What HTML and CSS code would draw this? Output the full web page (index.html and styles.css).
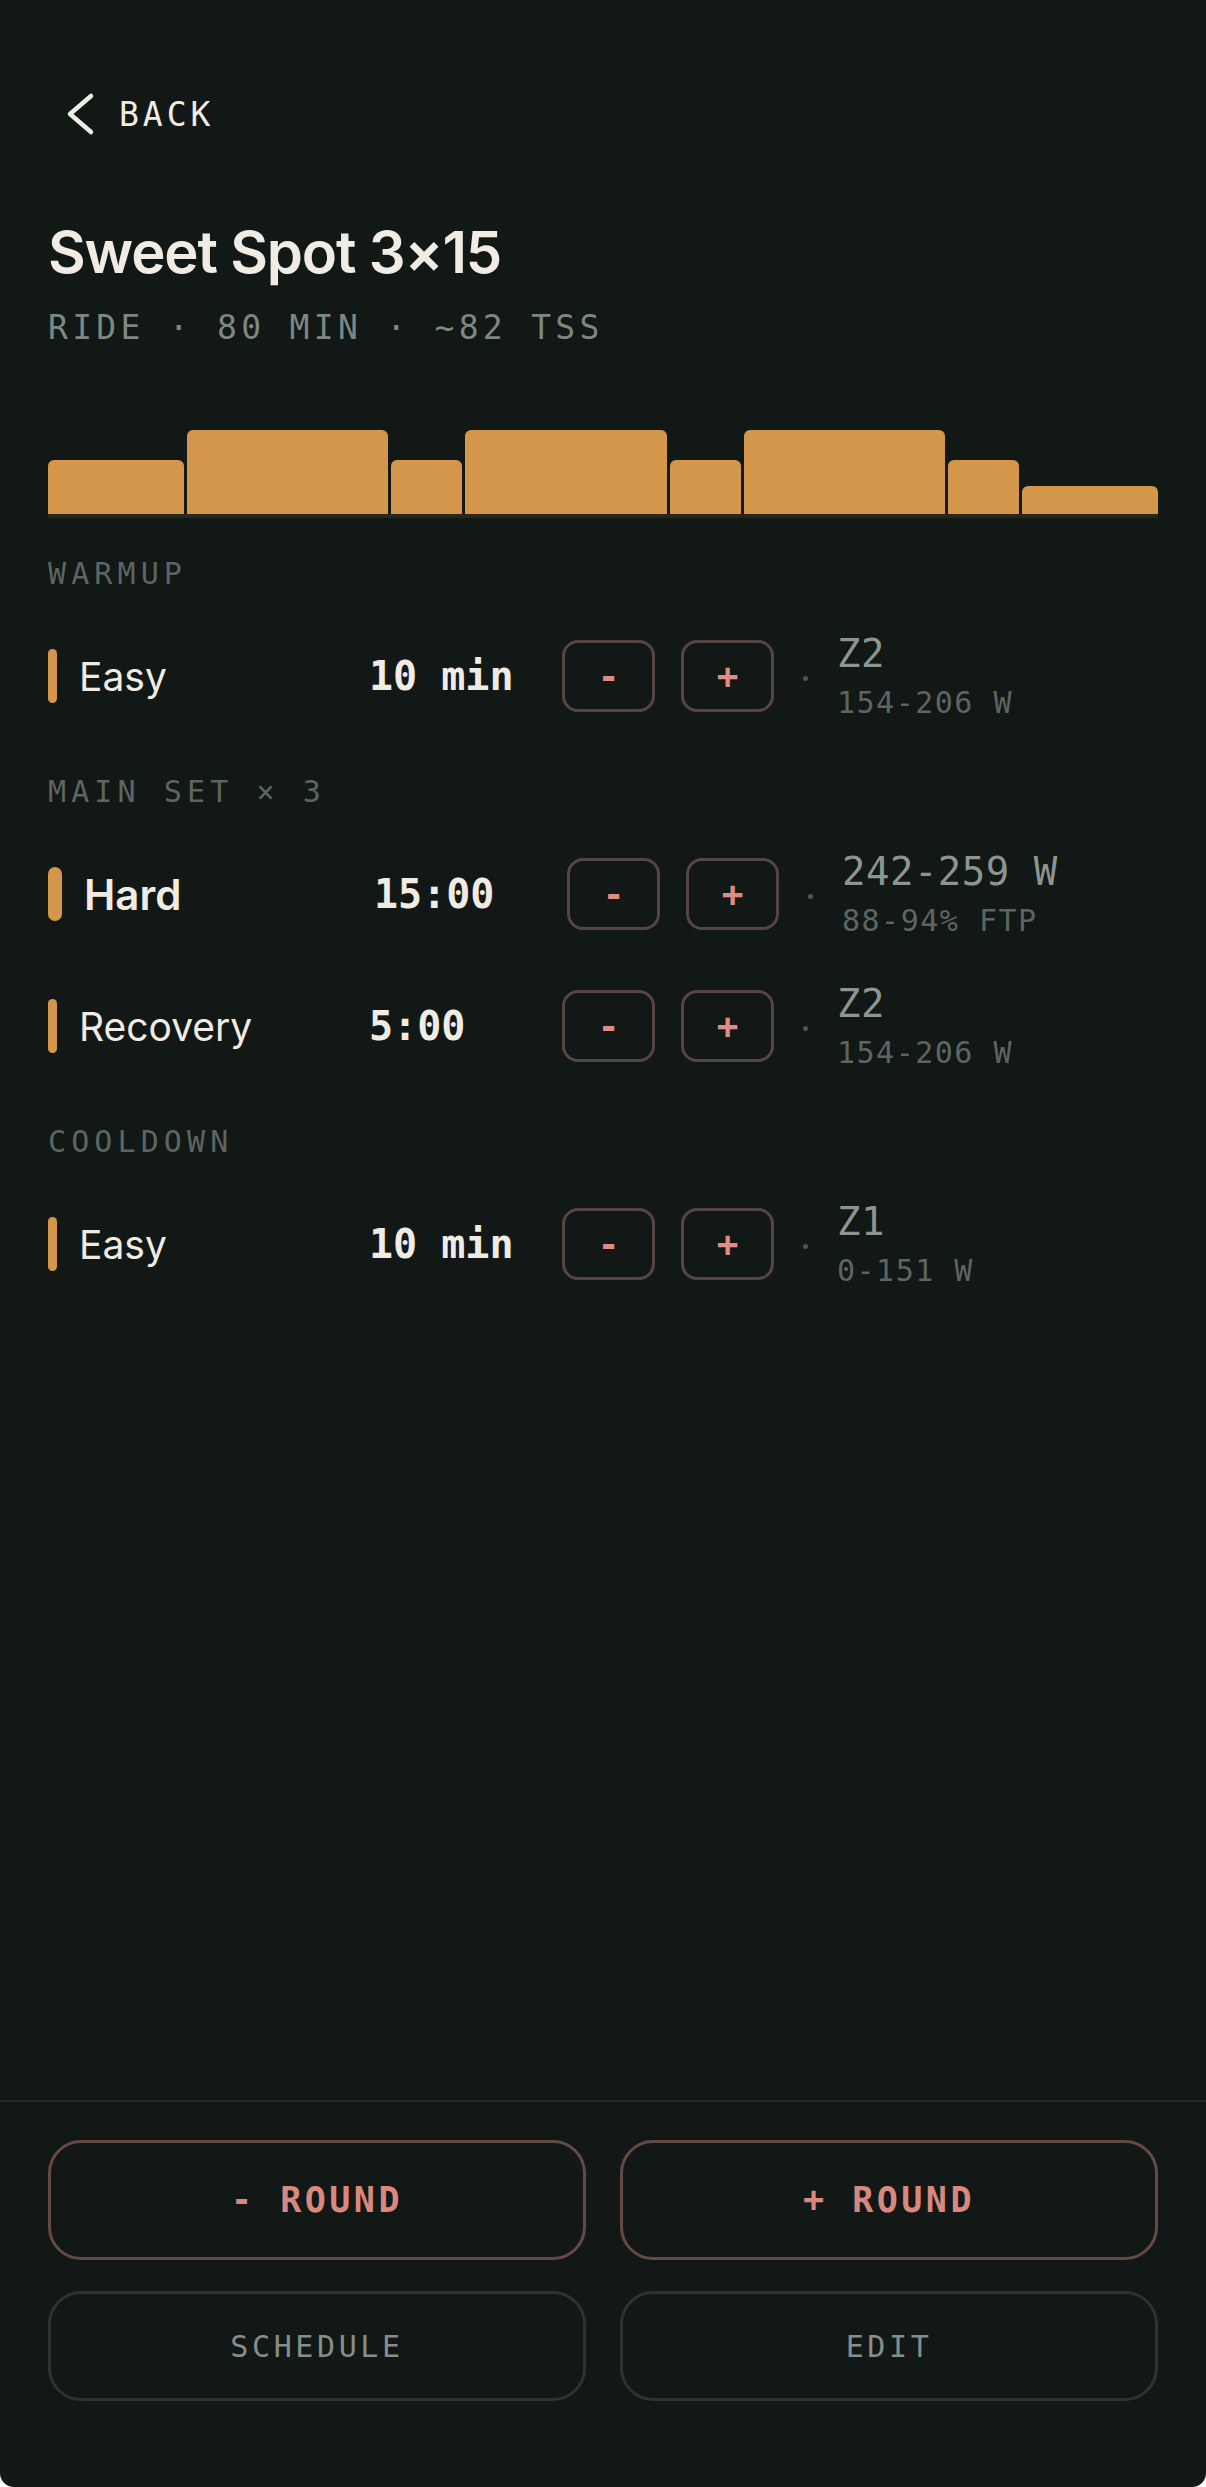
FILE: index.html
```html
<!DOCTYPE html>
<html lang="en">
<head>
    <meta charset="UTF-8">
    <meta name="viewport" content="width=device-width, initial-scale=1.0">
    <title>Sweet Spot 3×15</title>
    <link rel="stylesheet" href="styles.css">
</head>
<body>
    <div id="app">
        <div class="content">
            <a class="back" href="#">
                <svg class="back-icon" viewBox="0 0 48 44" width="48" height="44">
                    <polyline points="43,4 22,22 43,40" fill="none" stroke="#f0ebe3" stroke-width="4.5" stroke-linecap="round" stroke-linejoin="round"/>
                </svg>
                <span>BACK</span>
            </a>

            <h1 class="title">Sweet Spot 3×15</h1>
            <p class="meta">RIDE · 80 MIN · ~82 TSS</p>

            <div class="chart">
                <div class="bar" style="flex-grow: 10; height: 54px"></div>
                <div class="bar" style="flex-grow: 15; height: 84px"></div>
                <div class="bar" style="flex-grow: 5; height: 54px"></div>
                <div class="bar" style="flex-grow: 15; height: 84px"></div>
                <div class="bar" style="flex-grow: 5; height: 54px"></div>
                <div class="bar" style="flex-grow: 15; height: 84px"></div>
                <div class="bar" style="flex-grow: 5; height: 54px"></div>
                <div class="bar" style="flex-grow: 10; height: 28px"></div>
            </div>

            <div class="section-label">WARMUP</div>
            <div class="step">
                <span class="step-mark"></span>
                <span class="step-name">Easy</span>
                <span class="step-dur">10 min</span>
                <div class="step-adjust"><button>-</button><button>+</button></div>
                <span class="step-dot"></span>
                <div class="step-zone">
                    <div class="zone-main">Z2</div>
                    <div class="zone-sub">154-206 W</div>
                </div>
            </div>

            <div class="section-label">MAIN SET × 3</div>
            <div class="step step-hard">
                <span class="step-mark"></span>
                <span class="step-name">Hard</span>
                <span class="step-dur">15:00</span>
                <div class="step-adjust"><button>-</button><button>+</button></div>
                <span class="step-dot"></span>
                <div class="step-zone">
                    <div class="zone-main">242-259 W</div>
                    <div class="zone-sub">88-94% FTP</div>
                </div>
            </div>
            <div class="step">
                <span class="step-mark"></span>
                <span class="step-name">Recovery</span>
                <span class="step-dur">5:00</span>
                <div class="step-adjust"><button>-</button><button>+</button></div>
                <span class="step-dot"></span>
                <div class="step-zone">
                    <div class="zone-main">Z2</div>
                    <div class="zone-sub">154-206 W</div>
                </div>
            </div>

            <div class="section-label">COOLDOWN</div>
            <div class="step">
                <span class="step-mark"></span>
                <span class="step-name">Easy</span>
                <span class="step-dur">10 min</span>
                <div class="step-adjust"><button>-</button><button>+</button></div>
                <span class="step-dot"></span>
                <div class="step-zone">
                    <div class="zone-main">Z1</div>
                    <div class="zone-sub">0-151 W</div>
                </div>
            </div>
        </div>

        <div class="footer">
            <button class="btn btn-round">- ROUND</button>
            <button class="btn btn-round">+ ROUND</button>
            <button class="btn btn-plain">SCHEDULE</button>
            <button class="btn btn-plain">EDIT</button>
        </div>
    </div>
</body>
</html>
```

FILE: styles.css
```css
:root {
    --bg: #111816;
    --text: #f0ebe3;
    --accent: #d4964a;
    --salmon: #e08c84;
    --muted: #7f8782;
    --dim: #5d6561;
    --mono: "DejaVu Sans Mono", "Liberation Mono", monospace;
    --sans: "Inter", "Noto Sans", sans-serif;
}

body {
    margin: 0;
    background: #ffffff;
}

#app {
    height: 2487px;
    background: var(--bg);
    color: var(--text);
    display: flex;
    flex-direction: column;
    border-radius: 0 0 14px 14px;
    overflow: hidden;
}

.content {
    flex: 1;
    padding: 0 48px;
}

.back {
    display: flex;
    align-items: center;
    gap: 23px;
    height: 44px;
    margin-top: 92px;
    color: var(--text);
    text-decoration: none;
    font-family: var(--mono);
    font-size: 33px;
    letter-spacing: 0.12em;
}

.back-icon {
    display: block;
}

.title {
    margin: 80px 0 0;
    font-family: var(--sans);
    font-weight: 600;
    font-size: 58px;
    line-height: 72px;
    letter-spacing: -0.02em;
}

.meta {
    margin: 20px 0 0;
    font-family: var(--mono);
    font-size: 33px;
    line-height: 40px;
    letter-spacing: 0.13em;
    color: var(--muted);
}

.chart {
    display: flex;
    align-items: flex-end;
    gap: 3px;
    height: 96px;
    margin-top: 70px;
    border-bottom: 4px solid #2a2819;
}

.bar {
    flex-shrink: 1;
    flex-basis: 6px;
    background: var(--accent);
    border-radius: 6px 6px 0 0;
}

.section-label {
    margin: 38px 0 18px;
    font-family: var(--mono);
    font-size: 30px;
    line-height: 36px;
    letter-spacing: 0.17em;
    color: var(--dim);
}

.step + .section-label {
    margin-top: 32px;
}

.step {
    display: flex;
    align-items: center;
    height: 72px;
    padding: 30px 0;
}

.step-mark {
    width: 9px;
    height: 54px;
    border-radius: 5px;
    background: var(--accent);
    margin-right: 22px;
    flex-shrink: 0;
}

.step-name {
    width: 290px;
    font-family: var(--sans);
    font-size: 39px;
    color: var(--text);
}

.step-hard .step-mark {
    width: 14px;
    border-radius: 7px;
}

.step-hard .step-name {
    font-size: 42px;
    font-weight: 600;
}

.step-dur {
    width: 193px;
    font-family: var(--mono);
    font-weight: bold;
    font-size: 40px;
    color: var(--text);
}

.step-adjust {
    display: flex;
    gap: 26px;
}

.step-adjust button {
    width: 93px;
    height: 72px;
    background: transparent;
    border: 3px solid #574543;
    border-radius: 16px;
    color: var(--salmon);
    font-family: var(--mono);
    font-weight: bold;
    font-size: 36px;
    padding: 0;
    cursor: pointer;
}

.step-dot {
    width: 5px;
    height: 5px;
    border-radius: 50%;
    background: #4e5552;
    margin: 4px 29px 0 29px;
}

.step-zone {
    font-family: var(--mono);
    letter-spacing: 0.03em;
}

.zone-main {
    font-size: 39px;
    line-height: 44px;
    color: #8d9590;
}

.zone-sub {
    margin-top: 9px;
    font-size: 30px;
    line-height: 36px;
    letter-spacing: 0.05em;
    color: var(--dim);
}

.footer {
    border-top: 2px solid #222926;
    padding: 38px 48px 86px;
    display: grid;
    grid-template-columns: 1fr 1fr;
    grid-template-rows: 120px 110px;
    column-gap: 34px;
    row-gap: 31px;
}

.btn {
    background: transparent;
    border-radius: 33px;
    font-family: var(--mono);
    cursor: pointer;
}

.btn-round {
    border: 3px solid #664945;
    color: #d9887e;
    font-weight: bold;
    font-size: 35px;
    letter-spacing: 0.1em;
}

.btn-plain {
    border: 3px solid #2c3330;
    color: #878e8a;
    font-size: 30px;
    letter-spacing: 0.12em;
}
```
